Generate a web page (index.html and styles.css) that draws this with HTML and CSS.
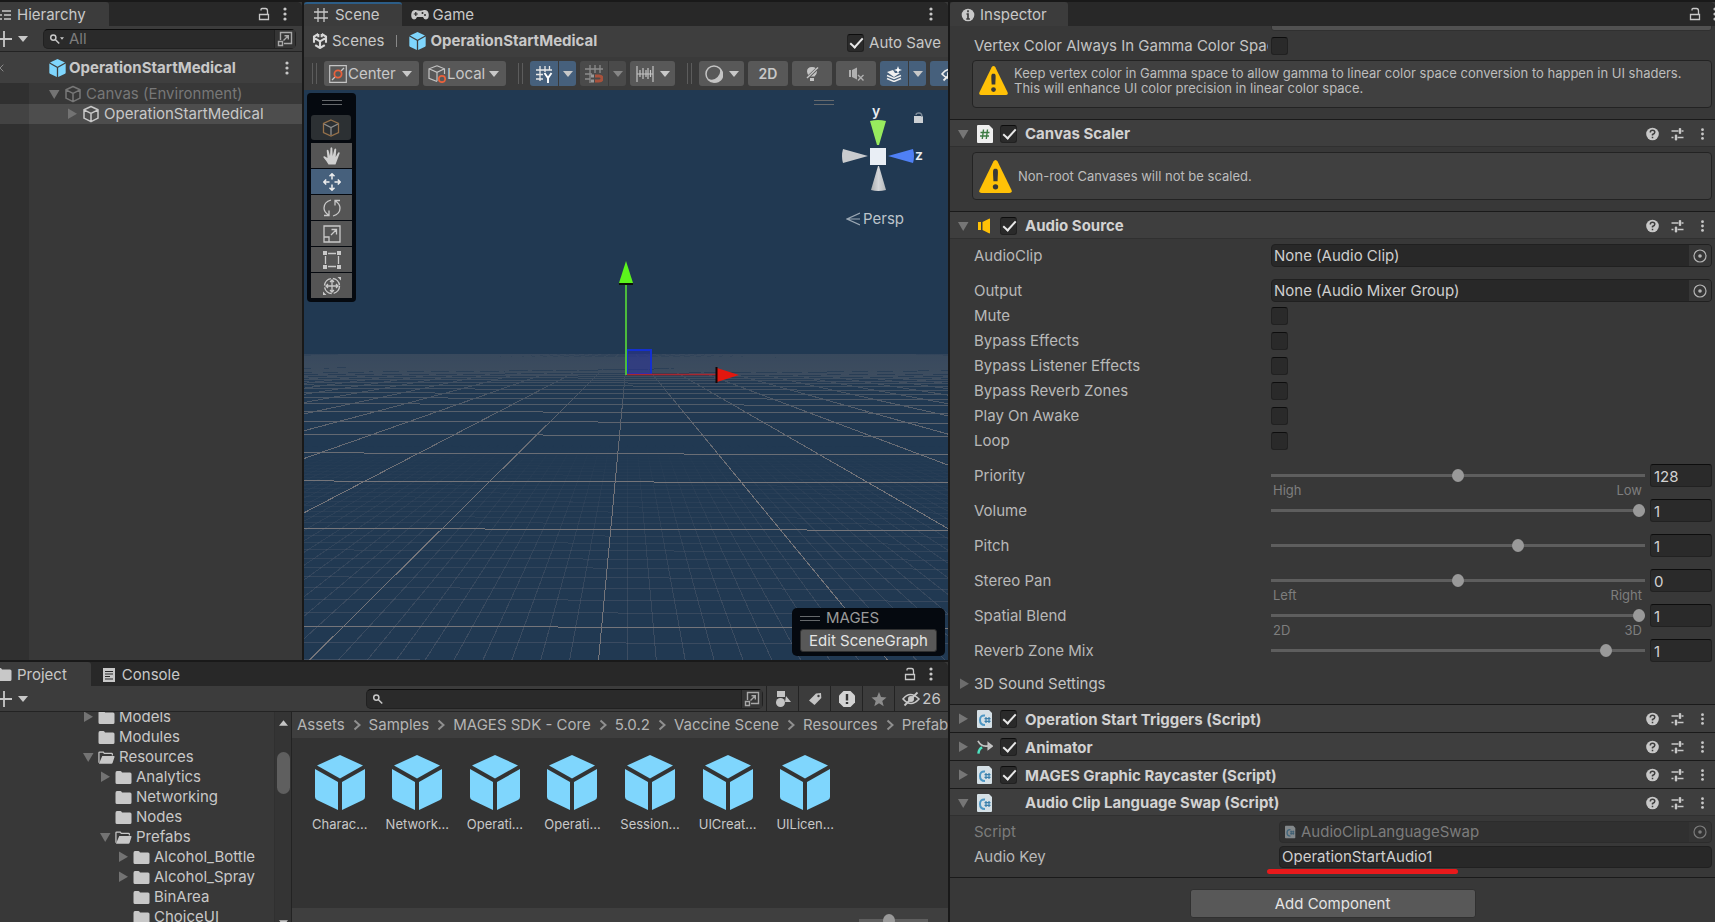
FILE: index.html
```html
<!DOCTYPE html>
<html lang="en">
<head>
    <meta charset="UTF-8">
    <meta name="viewport" content="width=device-width, initial-scale=1.0">
    <title>Scene Editor</title>
    <link rel="stylesheet" href="styles.css">
</head>
<body>

    <!-- icon sprite -->
    <svg class="sprite" aria-hidden="true">
        <symbol id="i-dots" viewBox="0 0 16 16"><g fill="currentColor"><circle cx="8" cy="3" r="1.6"/><circle cx="8" cy="8" r="1.6"/><circle cx="8" cy="13" r="1.6"/></g></symbol>
        <symbol id="i-lock" viewBox="0 0 16 16"><path d="M3.5 8.500h9v5h-9zM5 4.500V3.500Q5 2.500 6 2.500H9.500Q11.500 2.500 11.500 5V8.500" fill="none" stroke="currentColor" stroke-width="1.300"/></symbol>
        <symbol id="i-caret" viewBox="0 0 10 6"><path d="M0 0h10L5 6z" fill="currentColor"/></symbol>
        <symbol id="i-plus" viewBox="0 0 16 16"><path d="M8 0v16M0 8h16" stroke="currentColor" stroke-width="1.800"/></symbol>
        <symbol id="i-down" viewBox="0 0 12 12"><path d="M1 2h10.500L6.200 11z" fill="currentColor"/></symbol>
        <symbol id="i-right" viewBox="0 0 12 12"><path d="M2 .5v10.500L11 5.800z" fill="currentColor"/></symbol>
        <symbol id="i-search" viewBox="0 0 12 12"><g fill="none" stroke="currentColor" stroke-width="1.500"><circle cx="4.300" cy="4.600" r="2.600"/><path d="M6.200 6.500l4 4"/></g></symbol>
        <symbol id="i-popout" viewBox="0 0 16 16"><g fill="none" stroke="currentColor" stroke-width="1.400"><path d="M3.500 9V1.500h11v11H7M1.500 10.500h4v4h-4zM6.500 9.500l4.500-4.500M7.500 4.700h3.800V8.500"/></g></symbol>
        <symbol id="i-list" viewBox="0 0 14 14"><path d="M0 3h2M4 3h9M2 7h2M6 7h7M2 11h2M6 11h7" stroke="currentColor" stroke-width="1.600"/></symbol>
        <symbol id="i-cube" viewBox="0 0 50 55"><g fill="#7fd6fd"><path d="M25 0L48 10.500 25 23.500 2 10.500z"/><path d="M0 14l23 13v28L2 45Q0 44 0 42zM50 14L27 27v28l21-10Q50 44 50 42z"/></g></symbol>
        <symbol id="i-cubeline" viewBox="0 0 18 18"><path d="M9 1.500l7 3.300v8.400l-7 3.500-7-3.500V4.800zM2 4.800l7 3.600 7-3.600M9 8.400v8.300" fill="none" stroke="currentColor" stroke-width="1.500" stroke-linejoin="round"/></symbol>
        <symbol id="i-grid" viewBox="0 0 14 14"><path d="M4 0v14M10 0v14M0 4h14M0 10h14" stroke="currentColor" stroke-width="1.300"/></symbol>
        <symbol id="i-pad" viewBox="0 0 18 12"><path d="M5 1Q9 2.500 13 1 17 .5 17.700 5q.5 5-2.700 5.500Q13 10.500 12 8H6Q5 10.500 3 10.500-.2 10 .3 5 1 .5 5 1z" fill="currentColor"/><path d="M4.800 3v4M2.800 5h4" stroke="#282828" stroke-width="1.200"/><circle cx="11.500" cy="4" r="1" fill="#282828"/><circle cx="14" cy="6" r="1" fill="#282828"/></symbol>
        <symbol id="i-unity" viewBox="0 0 16 16"><path d="M6.300 1L2 3.500v6.300M9.700 1L14 3.500v6.300M3.200 12.200L8 15l4.800-2.800M8 8.300V14M8 8.300L3 5.300M8 8.300l5-3M6.300 1v3.300M9.700 1v3.300" fill="none" stroke="#d8d8d8" stroke-width="2.100"/></symbol>
        <symbol id="i-info" viewBox="0 0 14 14"><circle cx="7" cy="7" r="6.300" fill="currentColor"/><path d="M7 2.300v2M5.500 6H7v5M5.300 11h3.600" stroke="#3c3c3c" stroke-width="1.700" fill="none"/></symbol>
        <symbol id="i-help" viewBox="0 0 14 14"><circle cx="7" cy="7" r="6.300" fill="currentColor"/><path d="M4.800 5.500Q4.800 3.300 7 3.300q2.300 0 2.300 1.900Q9.300 6.500 7 7.500v1M7 9.800v1.500" stroke="#3e3e3e" stroke-width="1.500" fill="none"/></symbol>
        <symbol id="i-preset" viewBox="0 0 14 14"><path d="M1 4h7M11 4h2M9.500 1v6M1 10.500h2M7 10.500h6M5.500 7.500v6" stroke="currentColor" stroke-width="1.500"/><path d="M9.500 1.500v5M5.500 8v5" stroke="currentColor" stroke-width="2.400"/></symbol>
        <symbol id="i-warn" viewBox="0 0 32 32"><path d="M16 0q1.200 0 2 1.500L31.500 29q1 3-2 3h-27q-3 0-2-3L14 1.500Q14.800 0 16 0z" fill="#ffc107"/><path d="M16 8.500c3 0 2.500 1.500 2 12h-4c-.5-10.500-1-12 2-12z" fill="#383838"/><circle cx="16" cy="26" r="2.600" fill="#383838"/></symbol>
        <symbol id="i-hash" viewBox="0 0 16 18"><path d="M0 1q0-1 1-1h11l4 4v13q0 1-1 1H1q-1 0-1-1z" fill="#eee"/><path d="M6.500 4.500L5.300 14M10.500 4.500L9.300 14M3.500 7.500h9M3 11h9" stroke="#3c7b43" stroke-width="1.400"/></symbol>
        <symbol id="i-cs" viewBox="0 0 16 18"><path d="M0 1q0-1 1-1h11l3 3v14q0 1-1 1H1q-1 0-1-1z" fill="#d5e0e6"/><path d="M8 5.500Q3 5 3 10t5 5" fill="none" stroke="#4d97c4" stroke-width="2"/><path d="M9 7v6M12 7v6M7.500 8.700h6M7.500 11.400h6" stroke="#3a7fab" stroke-width="1.200"/></symbol>
        <symbol id="i-speaker" viewBox="0 0 16 16"><path d="M1 4h3v8H1zM5.500 4L12 .7q1-.4 1 .6v13.400q0 1-1 .6L5.500 12z" fill="#ffc107"/></symbol>
        <symbol id="i-animator" viewBox="0 0 17 16"><path d="M1 1.500Q4 7 9 7h6M12 3.800L16 7l-4 3.200z" fill="#c4c4c4" stroke="#c4c4c4" stroke-width="1.800" fill-opacity="0"/><path d="M1.500 15q.5-5 4-6.500" stroke="#4de3c1" stroke-width="2.600" fill="none"/></symbol>
        <symbol id="i-target" viewBox="0 0 14 14"><circle cx="7" cy="7" r="6" fill="none" stroke="currentColor" stroke-width="1.200"/><circle cx="7" cy="7" r="1.800" fill="currentColor"/></symbol>
        <symbol id="i-folder" viewBox="0 0 16 13"><path d="M0 2q0-2 1.500-2H5q1 0 1.500 1.500h8q1.500 0 1.500 1.500v8.500q0 1.500-1.500 1.500h-13Q0 13 0 11.500z" fill="currentColor"/></symbol>
        <symbol id="i-open" viewBox="0 0 18 13"><path d="M1 12V1.500q0-.8.800-.8h3.800l1 1.500h7.800q.8 0 .8.800v1.500" fill="none" stroke="currentColor" stroke-width="1.300"/><path d="M4.500 5h12.300q1 0 .7 1L15.500 12q-.3 1-1.300 1H1z" fill="currentColor"/></symbol>
        <symbol id="i-console" viewBox="0 0 12 14"><path d="M0 0h12v14H0z" fill="currentColor"/><path d="M2 3.500h8M2 6h8M2 8.500h5M2 11h8" stroke="#282828" stroke-width="1.200"/></symbol>
        <symbol id="i-eye" viewBox="0 0 18 14"><path d="M1 7q7-9 16 0-8 9-16 0z" fill="none" stroke="currentColor" stroke-width="1.600"/><circle cx="9" cy="7" r="3" fill="currentColor"/><path d="M2.500 13.500L15.500.5" stroke="currentColor" stroke-width="1.800"/></symbol>
        <symbol id="i-chev" viewBox="0 0 8 12"><path d="M1.500 1.500L6.500 6l-5 4.500" fill="none" stroke="#8f8f8f" stroke-width="2"/></symbol>
    </svg>

    <div class="workspace">
        <div class="top">

            <section class="panel hierarchy">
                <header class="tabs">
                    <button class="tab active"><svg class="ic14"><use href="#i-list"/></svg>Hierarchy</button>
                    <span class="tab-tools">
                        <svg class="ic16"><use href="#i-lock"/></svg>
                        <svg class="ic16"><use href="#i-dots"/></svg>
                    </span>
                </header>
                <div class="bar">
                    <button class="add" aria-label="Create"><svg class="ic16"><use href="#i-plus"/></svg><svg class="caret"><use href="#i-caret"/></svg></button>
                    <label class="search">
                        <svg class="ic12"><use href="#i-search"/></svg><svg class="caret tiny"><use href="#i-caret"/></svg>
                        <input type="text" placeholder="All" aria-label="Search hierarchy">
                        <span class="pop"><svg class="ic16"><use href="#i-popout"/></svg></span>
                    </label>
                </div>
                <div class="stage-head">
                    <svg class="back" viewBox="0 0 6 12"><path d="M0 6L5 1M0 6l5 5" stroke="#8a8a8a" stroke-width="1.500"/></svg>
                    <svg class="cube18"><use href="#i-cube"/></svg>
                    <b>OperationStartMedical</b>
                    <svg class="ic16 end"><use href="#i-dots"/></svg>
                </div>
                <div class="nodes">
                    <div class="node dim"><svg class="ic12"><use href="#i-down"/></svg><svg class="ic18"><use href="#i-cubeline"/></svg>Canvas (Environment)</div>
                    <div class="node picked"><svg class="ic12"><use href="#i-right"/></svg><svg class="ic18"><use href="#i-cubeline"/></svg>OperationStartMedical</div>
                </div>
            </section>

            <section class="panel scene">
                <header class="tabs">
                    <button class="tab active focus"><svg class="ic14"><use href="#i-grid"/></svg>Scene</button>
                    <button class="tab game"><svg class="pad"><use href="#i-pad"/></svg>Game</button>
                    <span class="tab-tools"><svg class="ic16"><use href="#i-dots"/></svg></span>
                </header>
                <div class="crumbs">
                    <svg class="ic16"><use href="#i-unity"/></svg>
                    <a href="#">Scenes</a>
                    <i class="rule"></i>
                    <svg class="cube18"><use href="#i-cube"/></svg>
                    <b>OperationStartMedical</b>
                    <label class="autosave"><input type="checkbox" checked>Auto Save</label>
                </div>
                <div class="toolbar">
                    <i class="grip"></i>
                    <label class="tool drop center">
                        <svg class="ic18" viewBox="0 0 18 18"><path d="M.7.700h16.600v16.600H.7z" fill="none" stroke="#c4c4c4" stroke-width="1.200"/><path d="M3 15l3-3M12 6l3-3" stroke="#c4c4c4" stroke-width="1.300"/><circle cx="9" cy="9" r="3.600" fill="none" stroke="#e8613c" stroke-width="1.800"/></svg>
                        <select aria-label="Pivot mode"><option>Center</option></select>
                        <svg class="caret"><use href="#i-caret"/></svg>
                    </label>
                    <label class="tool drop local">
                        <svg class="ic18" viewBox="0 0 18 18"><path d="M9 .8l7.500 3V9M9 16.500l-8-3.200V3.800l8-3M1 3.800l8 3.500 7.500-3.500M9 7.300v9" fill="none" stroke="#c4c4c4" stroke-width="1.200"/><circle cx="14" cy="14" r="3.200" fill="#585858" stroke="#e8613c" stroke-width="1.700"/></svg>
                        <select aria-label="Pivot rotation"><option>Local</option></select>
                        <svg class="caret"><use href="#i-caret"/></svg>
                    </label>
                    <i class="grip far"></i>
                    <span class="pair on">
                        <button class="tool" aria-label="Grid"><svg class="ic18" viewBox="0 0 18 18"><path d="M5 1v15M10 1v6M14.500 1v4M1 5h16M1 9.500h7M1 14h7" stroke="#e8e8e8" stroke-width="1.300"/><path d="M9.500 8l3.500 5 3.500-5M13 12.500V18" fill="none" stroke="#fff" stroke-width="1.900"/></svg></button>
                        <button class="tool arrow" aria-label="Grid options"><svg class="caret"><use href="#i-caret"/></svg></button>
                    </span>
                    <span class="pair off">
                        <button class="tool" aria-label="Snap"><svg class="ic18" viewBox="0 0 18 18"><path d="M5 0v18M10 0v8M15 0v8M0 4h18M0 9h7M0 14h5" stroke="#8c8c8c" stroke-width="1.300"/><path d="M10 11h4q3 0 3 2.500T14 16h-4" stroke="#a9523c" stroke-width="3" fill="none"/><path d="M6 9.500h3v3H6zM6 14.500h3v3H6z" fill="#9a9a9a"/></svg></button>
                        <button class="tool arrow" aria-label="Snap options"><svg class="caret"><use href="#i-caret"/></svg></button>
                    </span>
                    <button class="tool wide" aria-label="Snap increment"><svg class="ic18" viewBox="0 0 18 18"><path d="M1 1v16M17 1v16M4 5v7M7 3v11M10 5v7M12 3v11M14.500 5v7M1 9h16" stroke="#c4c4c4" stroke-width="1.200"/></svg><svg class="caret"><use href="#i-caret"/></svg></button>
                    <i class="grip far"></i>
                    <button class="tool wide" aria-label="Draw mode"><svg class="ic18" viewBox="0 0 18 18"><circle cx="9" cy="9" r="8" fill="none" stroke="#c4c4c4" stroke-width="1.500"/><path d="M14.500 3a8 8 0 1 1-11 11 8.500 8.500 0 0 0 11-11z" fill="#c4c4c4"/></svg><svg class="caret"><use href="#i-caret"/></svg></button>
                    <button class="tool two-d">2D</button>
                    <button class="tool single" aria-label="Lighting"><svg class="ic16" viewBox="0 0 16 16"><path d="M8 1Q13 1 13 5.500 13 8 10.500 10.500h-5Q3 8 3 5.500 3 1 8 1zM6 12h4v3H6z" fill="#c4c4c4"/><path d="M2 13L15 1" stroke="#585858" stroke-width="3"/><path d="M3 12L14 1.500" stroke="#c4c4c4" stroke-width="1.400"/></svg></button>
                    <button class="tool single" aria-label="Audio"><svg class="ic16" viewBox="0 0 16 16"><path d="M1 4h2v7H1zM4 4l5-2.500v12L4 11z" fill="#b0b0b0"/><path d="M10 9l5.500 5.500M15.500 9L10 14.500" stroke="#b0b0b0" stroke-width="1.400"/></svg></button>
                    <span class="pair on">
                        <button class="tool" aria-label="Effects"><svg class="ic16" viewBox="0 0 16 16"><path d="M1 6l6-2 2 3 5 0-6 4z" fill="#eee"/><path d="M1 9.500l7 3 7-3M1 12.500l7 3 7-3" fill="none" stroke="#eee" stroke-width="1.500"/><path d="M12 0l1 3 3 1-3 1-1 3-1-3-3-1 3-1z" fill="#fff"/></svg></button>
                        <button class="tool arrow" aria-label="Effect options"><svg class="caret"><use href="#i-caret"/></svg></button>
                    </span>
                    <button class="tool eye" aria-label="Visibility"><svg class="ic18"><use href="#i-eye"/></svg></button>
                </div>

                <div class="view">
                    <svg class="world" viewBox="304 90 644 570" preserveAspectRatio="xMidYMid slice">
                        <defs>
                            <linearGradient id="fadeMajor" gradientUnits="userSpaceOnUse" x1="0" y1="352" x2="0" y2="480">
                                <stop offset="0" stop-color="#fff" stop-opacity=".08"/>
                                <stop offset=".2" stop-color="#fff" stop-opacity=".3"/>
                                <stop offset=".5" stop-color="#fff" stop-opacity=".7"/>
                                <stop offset="1" stop-color="#fff"/>
                            </linearGradient>
                            <linearGradient id="fadeMinor" gradientUnits="userSpaceOnUse" x1="0" y1="445" x2="0" y2="660">
                                <stop offset="0" stop-color="#fff" stop-opacity="0"/>
                                <stop offset=".5" stop-color="#fff" stop-opacity=".6"/>
                                <stop offset="1" stop-color="#fff"/>
                            </linearGradient>
                            <linearGradient id="haze" x1="0" y1="0" x2="0" y2="1">
                                <stop offset="0" stop-color="#6b6b76" stop-opacity=".24"/>
                                <stop offset="1" stop-color="#6b6b76" stop-opacity="0"/>
                            </linearGradient>
                            <mask id="mMajor" maskUnits="userSpaceOnUse" x="304" y="354" width="644" height="306"><path d="M304 354h644v306H304z" fill="url(#fadeMajor)"/></mask>
                            <mask id="mMinor" maskUnits="userSpaceOnUse" x="304" y="354" width="644" height="306"><path d="M304 354h644v306H304z" fill="url(#fadeMinor)"/></mask>
                        </defs>
                        <path d="M304 354h644v34H304z" fill="url(#haze)"/>
                        <g mask="url(#mMinor)"><g id="minor" stroke="#747481" stroke-opacity=".34"></g></g>
                        <g mask="url(#mMajor)"><g id="major" stroke="#75757a"></g></g>
                        <!-- move handle -->
                        <path d="M627 350h24v24h-24z" fill="#2a31a0" fill-opacity=".5" stroke="#1430cf" stroke-width="2"/>
                        <path d="M627 374.500h90" stroke="#a8272f" stroke-width="1.600"/>
                        <path d="M717 368l22 7-22 7z" fill="#e3170f"/><path d="M716.500 367v16" stroke="#140505" stroke-width="2"/>
                        <path d="M626 284v91" stroke="#4cbb3c" stroke-width="2"/>
                        <path d="M626 261l7 22h-14z" fill="#5cf41c"/><path d="M619 284h14" stroke="#0c1406" stroke-width="2"/>
                    </svg>

                    <div class="palette">
                        <i class="handle"></i>
                        <button class="first" aria-label="Tool context"><svg viewBox="0 0 18 18"><path d="M9 1l7.500 3.500v9L9 17l-7.500-3.500v-9z" fill="none" stroke="#96714a" stroke-width="1.300"/><path d="M2 5l7 3.500L16 5M9 8.500V16" fill="none" stroke="#8f8f8f" stroke-width="1.300"/></svg></button>
                        <button aria-label="View"><svg viewBox="0 0 18 18"><path d="M5.500 17.500Q4 14.500.5 10.500q-.5-1.500 1-1.300L4.500 11 3.700 3.500q1-1.500 1.800 0L7 9 7.500 1q1-1.500 1.800 0L9.700 9 11.500 2q1.200-1.300 1.700.3L12.700 10l2.500-4.500q1.500-.8 1.500.8L14 13.500l-1.500 4z" fill="#d0d0d0"/></svg></button>
                        <button class="on" aria-label="Move"><svg viewBox="0 0 18 18"><path d="M9 6.500V1M9 11.500V17M6.500 9H1M11.500 9H17M6.500 3.200L9 .8l2.500 2.400M6.500 14.800L9 17.200l2.500-2.400M3.200 6.500L.8 9l2.400 2.500M14.800 6.500L17.200 9l-2.400 2.500" fill="none" stroke="#eee" stroke-width="1.500"/></svg></button>
                        <button aria-label="Rotate"><svg viewBox="0 0 18 18"><path d="M5.500 16Q1 13 1 9q0-6 7-8M12.500 2Q17 5 17 9q0 6-7 8M1 16.500h5V11.500M17 1.500h-5V6.500" fill="none" stroke="#c9c9c9" stroke-width="1.300"/></svg></button>
                        <button aria-label="Scale"><svg viewBox="0 0 18 18"><path d="M1 1h16v16H1zM1 12h5v5M8 10l5.500-5.500M8.500 4.500h5V9.500" fill="none" stroke="#c9c9c9" stroke-width="1.300"/></svg></button>
                        <button aria-label="Rect"><svg viewBox="0 0 18 18"><path d="M2.500 5v8M15.500 5v8M5 2.500h8M5 15.500h8" stroke="#c9c9c9" stroke-width="1.300"/><path d="M0 0h4v4H0zM14 0h4v4h-4zM0 14h4v4H0zM14 14h4v4h-4z" fill="#c9c9c9"/></svg></button>
                        <button aria-label="Transform"><svg viewBox="0 0 18 18"><circle cx="9" cy="9" r="7.500" fill="none" stroke="#c9c9c9" stroke-width="1.400" stroke-dasharray="10 2"/><path d="M9 3v12M3 9h12M7 5l2-2 2 2M7 13l2 2 2-2M5 7L3 9l2 2M13 7l2 2-2 2" fill="none" stroke="#c9c9c9" stroke-width="1.300"/><path d="M14.500 0H18v3.500zM0 14.500V18h3.500z" fill="#c9c9c9"/></svg></button>
                    </div>

                    <div class="orient">
                        <i class="handle"></i>
                        <svg class="gizmo" viewBox="836 104 92 90">
                            <defs>
                                <linearGradient id="cone"><stop offset="0" stop-color="#aaadb0"/><stop offset=".5" stop-color="#d4d6d9"/><stop offset="1" stop-color="#b4b7ba"/></linearGradient>
                            </defs>
                            <path d="M870 121q8-2 16 0l-7 24h-2z" fill="#97ea5e"/>
                            <path d="M871 190q7 2 15 0l-7-24h-1z" fill="url(#cone)"/>
                            <path d="M843 149q-2 7 0 14l25-7z" fill="#c9cbce"/>
                            <path d="M913 149q2 7 0 14l-25-7z" fill="#4f80f5"/>
                            <path d="M870 148h16v17h-16z" fill="#e9eef5"/>
                            <path d="M914 116h9v7h-9z" fill="#ccd0d4"/><path d="M916 115q0-2 3-2t3 4" fill="none" stroke="#7d8b99" stroke-width="1.300"/>
                            <text x="876" y="116" class="axis" text-anchor="middle">y</text>
                            <text x="919" y="160" class="axis" text-anchor="middle">z</text>
                        </svg>
                        <button class="persp"><svg viewBox="0 0 14 14"><path d="M14 1L1 7l13 6M1 7h13" fill="none" stroke="#9aa7b3" stroke-width="1.200"/></svg>Persp</button>
                    </div>

                    <div class="mages">
                        <div class="mages-head"><i class="handle"></i>MAGES</div>
                        <button>Edit SceneGraph</button>
                    </div>
                </div>
            </section>
        </div>

        <section class="panel project">
            <header class="tabs">
                <button class="tab active folder-tab"><svg class="fold"><use href="#i-folder"/></svg>Project</button>
                <button class="tab console"><svg class="cons"><use href="#i-console"/></svg>Console</button>
                <span class="tab-tools">
                    <svg class="ic16"><use href="#i-lock"/></svg>
                    <svg class="ic16"><use href="#i-dots"/></svg>
                </span>
            </header>
            <div class="bar">
                <button class="add" aria-label="Create asset"><svg class="ic16"><use href="#i-plus"/></svg><svg class="caret"><use href="#i-caret"/></svg></button>
                <label class="search asset-search">
                    <svg class="ic12"><use href="#i-search"/></svg>
                    <input type="text" aria-label="Search assets">
                    <span class="pop"><svg class="ic16"><use href="#i-popout"/></svg></span>
                </label>
                <div class="filters">
                    <button aria-label="Search by type"><svg class="ic16" viewBox="0 0 16 16"><path d="M2 0h8v6H2zM11 5l5 6h-6z" fill="#c4c4c4"/><circle cx="5.500" cy="11.500" r="4.500" fill="#c4c4c4"/></svg></button>
                    <button aria-label="Search by label"><svg class="ic14" viewBox="0 0 14 14"><path d="M1 8.500L8 1.500l5-.5.3 5L6.500 13z" fill="#c4c4c4"/><circle cx="10.500" cy="4" r="1.200" fill="#3c3c3c"/></svg></button>
                    <button aria-label="Search by import log"><svg class="ic18" viewBox="0 0 18 18"><path d="M5.500 1h7L17 5.500v7L12.500 17h-7L1 12.500v-7z" fill="#d2d2d2"/><path d="M9 4v6.500M9 12v2" stroke="#333" stroke-width="2.400"/></svg></button>
                    <button aria-label="Favorites"><svg class="ic16" viewBox="0 0 16 16"><path d="M8 1l2 5 5.500.4-4.200 3.500 1.400 5.300L8 12.300l-4.700 2.900 1.400-5.300L.5 6.400 6 6z" fill="#8c8c8c"/></svg></button>
                    <button class="hidden-count"><svg class="ic18"><use href="#i-eye"/></svg>26</button>
                </div>
            </div>
            <div class="browser">
                <div class="tree">
                    <ul>
                        <li class="l1"><svg class="ic12"><use href="#i-right"/></svg><svg class="fold"><use href="#i-folder"/></svg>Models</li>
                        <li class="l1"><svg class="ic12"></svg><svg class="fold"><use href="#i-folder"/></svg>Modules</li>
                        <li class="l1"><svg class="ic12"><use href="#i-down"/></svg><svg class="fold"><use href="#i-open"/></svg>Resources</li>
                        <li class="l2"><svg class="ic12"><use href="#i-right"/></svg><svg class="fold"><use href="#i-folder"/></svg>Analytics</li>
                        <li class="l2"><svg class="ic12"></svg><svg class="fold"><use href="#i-folder"/></svg>Networking</li>
                        <li class="l2"><svg class="ic12"></svg><svg class="fold"><use href="#i-folder"/></svg>Nodes</li>
                        <li class="l2"><svg class="ic12"><use href="#i-down"/></svg><svg class="fold"><use href="#i-open"/></svg>Prefabs</li>
                        <li class="l3"><svg class="ic12"><use href="#i-right"/></svg><svg class="fold"><use href="#i-folder"/></svg>Alcohol_Bottle</li>
                        <li class="l3"><svg class="ic12"><use href="#i-right"/></svg><svg class="fold"><use href="#i-folder"/></svg>Alcohol_Spray</li>
                        <li class="l3"><svg class="ic12"></svg><svg class="fold"><use href="#i-folder"/></svg>BinArea</li>
                        <li class="l3"><svg class="ic12"></svg><svg class="fold"><use href="#i-folder"/></svg>ChoiceUI</li>
                    </ul>
                    <div class="scroll"><svg class="up" viewBox="0 0 10 6"><path d="M0 6h10L5 0z" fill="#c4c4c4"/></svg><i class="bar-thumb"></i><svg class="down"><use href="#i-caret"/></svg></div>
                </div>
                <div class="files">
                    <nav class="path">
                        <a href="#">Assets</a><svg><use href="#i-chev"/></svg>
                        <a href="#">Samples</a><svg><use href="#i-chev"/></svg>
                        <a href="#">MAGES SDK - Core</a><svg><use href="#i-chev"/></svg>
                        <a href="#">5.0.2</a><svg><use href="#i-chev"/></svg>
                        <a href="#">Vaccine Scene</a><svg><use href="#i-chev"/></svg>
                        <a href="#">Resources</a><svg><use href="#i-chev"/></svg>
                        <a href="#">Prefabs</a>
                    </nav>
                    <div class="assets">
                        <figure><svg><use href="#i-cube"/></svg><figcaption>Charac...</figcaption></figure>
                        <figure><svg><use href="#i-cube"/></svg><figcaption>Network...</figcaption></figure>
                        <figure><svg><use href="#i-cube"/></svg><figcaption>Operati...</figcaption></figure>
                        <figure><svg><use href="#i-cube"/></svg><figcaption>Operati...</figcaption></figure>
                        <figure><svg><use href="#i-cube"/></svg><figcaption>Session...</figcaption></figure>
                        <figure><svg><use href="#i-cube"/></svg><figcaption>UICreat...</figcaption></figure>
                        <figure><svg><use href="#i-cube"/></svg><figcaption>UILicen...</figcaption></figure>
                    </div>
                    <div class="status"><input type="range" min="0" max="100" value="42" aria-label="Icon size"></div>
                </div>
            </div>
        </section>
    </div>

    <section class="panel inspector">
        <header class="tabs">
            <button class="tab active"><svg class="ic14"><use href="#i-info"/></svg>Inspector</button>
            <span class="tab-tools">
                <svg class="ic16"><use href="#i-lock"/></svg>
                <svg class="ic16"><use href="#i-dots"/></svg>
            </span>
        </header>
        <div class="props">
            <div class="canvas-part">
                <select class="channels" aria-label="Additional Shader Channels"><option></option></select>
                <div class="row check"><label for="vcol">Vertex Color Always In Gamma Color Space</label><input type="checkbox" id="vcol"></div>
                <div class="helpbox small"><svg><use href="#i-warn"/></svg><p>Keep vertex color in Gamma space to allow gamma to linear color space conversion to happen in UI shaders.<br>This will enhance UI color precision in linear color space.</p></div>
            </div>

            <div class="component open">
                <svg class="ic12 fold-arrow"><use href="#i-down"/></svg><svg class="type"><use href="#i-hash"/></svg>
                <input type="checkbox" id="c1" checked><label for="c1">Canvas Scaler</label>
                <span class="acts"><svg><use href="#i-help"/></svg><svg><use href="#i-preset"/></svg><svg><use href="#i-dots"/></svg></span>
            </div>
            <div class="helpbox"><svg><use href="#i-warn"/></svg><p>Non-root Canvases will not be scaled.</p></div>

            <div class="component open">
                <svg class="ic12 fold-arrow"><use href="#i-down"/></svg><svg class="type"><use href="#i-speaker"/></svg>
                <input type="checkbox" id="c2" checked><label for="c2">Audio Source</label>
                <span class="acts"><svg><use href="#i-help"/></svg><svg><use href="#i-preset"/></svg><svg><use href="#i-dots"/></svg></span>
            </div>
            <div class="body">
                <div class="row object"><label for="clip">AudioClip</label><span class="field"><input type="text" id="clip" value="None (Audio Clip)"><span class="pick"><svg><use href="#i-target"/></svg></span></span></div>
                <div class="row object"><label for="out">Output</label><span class="field"><input type="text" id="out" value="None (Audio Mixer Group)"><span class="pick"><svg><use href="#i-target"/></svg></span></span></div>
                <div class="toggles">
                    <div class="row check"><label for="t1">Mute</label><input type="checkbox" id="t1"></div>
                    <div class="row check"><label for="t2">Bypass Effects</label><input type="checkbox" id="t2"></div>
                    <div class="row check"><label for="t3">Bypass Listener Effects</label><input type="checkbox" id="t3"></div>
                    <div class="row check"><label for="t4">Bypass Reverb Zones</label><input type="checkbox" id="t4"></div>
                    <div class="row check"><label for="t5">Play On Awake</label><input type="checkbox" id="t5"></div>
                    <div class="row check"><label for="t6">Loop</label><input type="checkbox" id="t6"></div>
                </div>
                <div class="row slide"><label for="s1">Priority</label><div class="track"><input type="range" id="s1" min="0" max="256" value="128"><div class="ends"><span>High</span><span>Low</span></div></div><input type="text" class="num" value="128" aria-label="Priority value"></div>
                <div class="row slide"><label for="s2">Volume</label><div class="track"><input type="range" id="s2" min="0" max="1" step="0.01" value="1"></div><input type="text" class="num" value="1" aria-label="Volume value"></div>
                <div class="row slide"><label for="s3">Pitch</label><div class="track"><input type="range" id="s3" min="-3" max="3" step="0.01" value="1"></div><input type="text" class="num" value="1" aria-label="Pitch value"></div>
                <div class="row slide"><label for="s4">Stereo Pan</label><div class="track"><input type="range" id="s4" min="-1" max="1" step="0.01" value="0"><div class="ends"><span>Left</span><span>Right</span></div></div><input type="text" class="num" value="0" aria-label="Stereo pan value"></div>
                <div class="row slide"><label for="s5">Spatial Blend</label><div class="track"><input type="range" id="s5" min="0" max="1" step="0.01" value="1"><div class="ends"><span>2D</span><span>3D</span></div></div><input type="text" class="num" value="1" aria-label="Spatial blend value"></div>
                <div class="row slide"><label for="s6">Reverb Zone Mix</label><div class="track"><input type="range" id="s6" min="0" max="1.1" step="0.01" value="1"></div><input type="text" class="num" value="1" aria-label="Reverb zone mix value"></div>
                <div class="foldout"><svg class="ic12"><use href="#i-right"/></svg>3D Sound Settings</div>
            </div>

            <div class="component">
                <svg class="ic12 fold-arrow"><use href="#i-right"/></svg><svg class="type"><use href="#i-cs"/></svg>
                <input type="checkbox" id="c3" checked><label for="c3">Operation Start Triggers (Script)</label>
                <span class="acts"><svg><use href="#i-help"/></svg><svg><use href="#i-preset"/></svg><svg><use href="#i-dots"/></svg></span>
            </div>
            <div class="component">
                <svg class="ic12 fold-arrow"><use href="#i-right"/></svg><svg class="type"><use href="#i-animator"/></svg>
                <input type="checkbox" id="c4" checked><label for="c4">Animator</label>
                <span class="acts"><svg><use href="#i-help"/></svg><svg><use href="#i-preset"/></svg><svg><use href="#i-dots"/></svg></span>
            </div>
            <div class="component">
                <svg class="ic12 fold-arrow"><use href="#i-right"/></svg><svg class="type"><use href="#i-cs"/></svg>
                <input type="checkbox" id="c5" checked><label for="c5">MAGES Graphic Raycaster (Script)</label>
                <span class="acts"><svg><use href="#i-help"/></svg><svg><use href="#i-preset"/></svg><svg><use href="#i-dots"/></svg></span>
            </div>
            <div class="component open">
                <svg class="ic12 fold-arrow"><use href="#i-down"/></svg><svg class="type"><use href="#i-cs"/></svg>
                <span class="no-check"></span><b>Audio Clip Language Swap (Script)</b>
                <span class="acts"><svg><use href="#i-help"/></svg><svg><use href="#i-preset"/></svg><svg><use href="#i-dots"/></svg></span>
            </div>
            <div class="body script-body">
                <div class="row disabled"><label for="scr">Script</label><span class="field"><svg class="mini"><use href="#i-cs"/></svg><input type="text" id="scr" value="AudioClipLanguageSwap" disabled><span class="pick"><svg><use href="#i-target"/></svg></span></span></div>
                <div class="row key"><label for="key">Audio Key</label><span class="field"><input type="text" id="key" value="OperationStartAudio1"></span></div>
            </div>
            <div class="footer"><button class="add-component">Add Component</button></div>
        </div>
    </section>

    <script src="script.js"></script>
</body>
</html>
```

FILE: styles.css
```css
* {
    box-sizing: border-box;
}
body {
    margin: 0;
    height: 100vh;
    padding-top: 2px;
    display: flex;
    gap: 2px;
    overflow: hidden;
    background-color: #191919;
    color: #c8c8c8;
    font-family: Inter, "Liberation Sans", sans-serif;
    font-size: 15px;
    line-height: 20px;
}
button, input, select {
    font: inherit;
    color: inherit;
    margin: 0;
    padding: 0;
    border: none;
    background: none;
}
a {
    color: inherit;
    text-decoration: none;
}
b {
    font-weight: 700;
}
svg {
    display: block;
    flex: none;
}
.sprite {
    position: absolute;
    width: 0;
    height: 0;
}
.ic12 { width: 12px; height: 12px; }
.ic14 { width: 14px; height: 14px; }
.ic16 { width: 16px; height: 16px; }
.ic18 { width: 18px; height: 18px; }
.cube18 { width: 17px; height: 18px; }
.caret { width: 10px; height: 6px; }
.fold { width: 17px; height: 13px; }
.pad { width: 18px; height: 12px; }
.cons { width: 12px; height: 14px; }

/* layout */
.workspace {
    flex: 1;
    min-width: 0;
    display: flex;
    flex-direction: column;
    gap: 2px;
}
.top {
    flex: 1;
    min-height: 0;
    display: flex;
    gap: 2px;
}
.panel {
    display: flex;
    flex-direction: column;
    overflow: hidden;
    background-color: #383838;
}
.hierarchy { width: 302px; }
.scene { flex: 1; min-width: 0; }
.project { height: 260px; }
.inspector { width: 765px; }

/* tabs */
.tabs {
    flex: none;
    height: 24px;
    display: flex;
    background-color: #282828;
    border-radius: 0 5px 0 0;
}
.tab {
    display: flex;
    align-items: center;
    gap: 5px;
    padding: 1px 18px 0 12px;
    border-radius: 3px 3px 0 0;
}
.tab.active {
    background-color: #3c3c3c;
}
.tab.focus {
    border-top: 2px solid #2c5d87;
    padding: 0 22px 0 10px;
    gap: 7px;
}
.tab.game {
    padding-left: 9px;
    gap: 4px;
}
.tab.folder-tab {
    padding-left: 0;
    padding-right: 24px;
    margin-left: -5px;
}
.tab.console {
    gap: 7px;
}
.hierarchy .tab {
    padding-left: 0;
    padding-right: 23px;
    margin-left: -2px;
}
.inspector .tab {
    padding-left: 11px;
    padding-right: 21px;
}
.tab-tools {
    margin-left: auto;
    display: flex;
    align-items: center;
    gap: 5px;
    padding-right: 9px;
}
.inspector .tab-tools {
    padding-right: 0;
    gap: 4px;
    margin-right: -8px;
}

/* bars with search */
.bar {
    flex: none;
    height: 26px;
    display: flex;
    align-items: center;
    padding-right: 6px;
    background-color: #3c3c3c;
    border-bottom: 1px solid #232323;
}
.add {
    display: flex;
    align-items: center;
    gap: 6px;
    margin-left: -4px;
}
.search {
    margin-left: 15px;
    flex: 1;
    min-width: 0;
    height: 20px;
    display: flex;
    align-items: center;
    padding-left: 5px;
    background-color: #2a2a2a;
    border: 1px solid #212121;
    border-top-color: #0d0d0d;
    border-radius: 5px;
}
.search input {
    flex: 1;
    min-width: 0;
    outline: none;
    padding-left: 5px;
    line-height: 18px;
}
.search input::placeholder {
    color: #7d7d7d;
}
.caret.tiny {
    width: 4px;
    height: 3px;
    margin-left: -1px;
}
.pop {
    height: 18px;
    display: flex;
    align-items: center;
    padding: 0 2px;
    color: #a8a8a8;
    background-color: #353535;
    border-left: 1px solid #212121;
}
.project .bar {
    padding-right: 0;
}
.asset-search {
    margin-left: auto;
    flex: 0 0 397px;
}
.filters {
    height: 25px;
    margin-left: 3px;
    display: flex;
}
.filters button {
    display: flex;
    align-items: center;
    justify-content: center;
    width: 32px;
    border-left: 1px solid #232323;
}
.filters .hidden-count {
    width: 54px;
    gap: 2px;
}

/* hierarchy */
.stage-head {
    height: 31px;
    display: flex;
    align-items: center;
    gap: 3px;
    padding-right: 7px;
    background-color: #3f3f3f;
}
.back {
    width: 4px;
    height: 12px;
    margin-right: 42px;
}
.end {
    margin-left: auto;
}
.nodes {
    flex: 1;
    background: linear-gradient(to right, #303030 29px, #383838 29px);
}
.node {
    height: 20px;
    display: flex;
    align-items: center;
    gap: 4px;
    padding-left: 48px;
}
.node .ic12 {
    color: #737373;
}
.node.dim {
    height: 21px;
    color: #777;
}
.node.picked {
    padding-left: 66px;
    background: linear-gradient(to right, #434343 29px, #4d4d4d 29px);
}

/* scene */
.crumbs {
    flex: none;
    height: 31px;
    display: flex;
    align-items: center;
    gap: 4px;
    padding: 0 7px 2px 8px;
    background-color: #3e3e3e;
}
.crumbs .rule {
    width: 1px;
    height: 12px;
    margin: 0 8px;
    background-color: #888;
}
.autosave {
    margin-left: auto;
    padding-top: 5px;
    display: flex;
    align-items: center;
    gap: 5px;
}
.toolbar {
    flex: none;
    height: 33px;
    display: flex;
    align-items: center;
    gap: 4px;
    padding-left: 8px;
    background-color: #3a3a3a;
    overflow: hidden;
}
.grip {
    flex: none;
    width: 5px;
    height: 21px;
    margin-right: 3px;
    border: solid #5c5c5c;
    border-width: 0 1px;
}
.grip.far {
    margin-left: 8px;
}
.tool {
    flex: none;
    height: 25px;
    display: flex;
    align-items: center;
    justify-content: center;
    background-color: #585858;
    border-radius: 3px;
}
.drop select {
    appearance: none;
    flex: 1;
    min-width: 0;
    outline: none;
}
.drop {
    padding: 0 7px 0 5px;
    gap: 1px;
}
.center { width: 95px; }
.local { width: 83px; }
.pair {
    flex: none;
    display: flex;
    gap: 1px;
}
.pair .tool {
    width: 28px;
    border-radius: 3px 0 0 3px;
}
.pair .arrow {
    width: 17px;
    border-radius: 0 3px 3px 0;
}
.pair.on .tool, .tool.eye {
    background-color: #46607c;
}
.pair.off .tool {
    background-color: #4a4a4a;
    color: #858585;
}
.wide {
    width: 45px;
    gap: 6px;
}
.single, .two-d {
    width: 40px;
}
.two-d {
    font-size: 14px;
    font-weight: 600;
}
.tool.eye {
    width: 40px;
    color: #eee;
}
.view {
    flex: 1;
    min-height: 0;
    position: relative;
    background-color: #213952;
}
.world {
    position: absolute;
    width: 100%;
    height: 100%;
}
#major, #minor {
    shape-rendering: crispEdges;
}
.handle {
    display: block;
    width: 20px;
    height: 5px;
    border: solid #66696c;
    border-width: 1px 0;
}
.palette {
    position: absolute;
    left: 3px;
    top: 3px;
    width: 49px;
    padding: 7px 4px 4px;
    display: flex;
    flex-direction: column;
    gap: 1px;
    background-color: #05090f;
    border-radius: 4px;
}
.palette .handle {
    align-self: center;
}
.palette button {
    height: 25px;
    display: flex;
    align-items: center;
    justify-content: center;
    background-color: #555;
}
.palette button svg {
    width: 18px;
    height: 18px;
}
.palette .first {
    margin: 9px 1px 2px 0;
    background-color: #2c3033;
    border-radius: 3px;
}
.palette .on {
    background-color: #46607c;
}
.orient {
    position: absolute;
    right: 20px;
    top: 10px;
    width: 114px;
    display: flex;
    flex-direction: column;
}
.gizmo {
    width: 92px;
    height: 90px;
    margin: -1px 0 0 22px;
    overflow: visible;
}
.axis {
    font-size: 14px;
    font-weight: 600;
    fill: #e8edf2;
}
.persp {
    display: flex;
    align-items: center;
    gap: 3px;
    margin: 15px 0 0 32px;
    color: #bcc4cb;
}
.persp svg {
    width: 14px;
    height: 14px;
}
.mages {
    position: absolute;
    right: 3px;
    bottom: 4px;
    width: 153px;
    padding: 0 8px 4px;
    background-color: #05090f;
    border-radius: 5px;
}
.mages-head {
    display: flex;
    align-items: center;
    gap: 6px;
    height: 20px;
    margin-bottom: 1px;
    color: #9a9a9a;
}
.mages button {
    display: block;
    width: 100%;
    height: 23px;
    background-color: #585858;
    color: #e4e4e4;
    border-radius: 3px;
    border: 1px solid #303030;
}

/* project */
.browser {
    flex: 1;
    min-height: 0;
    display: flex;
}
.tree {
    width: 292px;
    display: flex;
    overflow: hidden;
    border-right: 1px solid #232323;
}
.tree ul {
    list-style: none;
    flex: 1;
    margin: -5px 0 0;
    padding: 0;
}
.tree li {
    height: 20px;
    display: flex;
    align-items: center;
    gap: 4px;
    color: #c8c8c8;
}
.tree li .ic12 {
    color: #737373;
}
.l1 { padding-left: 82px; }
.l2 { padding-left: 99px; }
.l3 { padding-left: 117px; }
.scroll {
    width: 17px;
    display: flex;
    flex-direction: column;
    align-items: center;
    padding-top: 8px;
    background-color: #343434;
    border-left: 1px solid #303030;
}
.scroll .up, .scroll .down {
    width: 9px;
    height: 6px;
    color: #c4c4c4;
}
.scroll .down {
    margin-top: auto;
    margin-bottom: -4px;
}
.bar-thumb {
    width: 13px;
    height: 42px;
    margin-top: 26px;
    background-color: #5f5f5f;
    border-radius: 7px;
}
.files {
    flex: 1;
    min-width: 0;
    display: flex;
    flex-direction: column;
    background-color: #333;
}
.path {
    flex: none;
    height: 26px;
    display: flex;
    align-items: center;
    gap: 8px;
    padding-left: 5px;
    white-space: nowrap;
    overflow: hidden;
    background-color: #3e3e3e;
    color: #b4b4b4;
}
.path svg {
    width: 8px;
    height: 12px;
}
.assets {
    flex: 1;
    width: 543px;
    margin-left: 9px;
    padding-top: 17px;
    display: grid;
    grid-template-columns: repeat(7, 1fr);
}
.assets figure {
    margin: 0;
    display: flex;
    flex-direction: column;
    align-items: center;
    gap: 4px;
}
.assets svg {
    width: 50px;
    height: 55px;
}
.assets figcaption {
    font-size: 13px;
    line-height: 20px;
}
.status {
    flex: none;
    height: 14px;
    background-color: #3f3f3f;
    padding: 3px 20px 0 0;
    overflow: hidden;
}
.status input {
    display: block;
    width: 69px;
    margin-left: auto;
}

/* form controls */
input[type="checkbox"] {
    appearance: none;
    flex: none;
    width: 17px;
    height: 18px;
    background-color: #2a2a2a;
    border: 1px solid #212121;
    border-top-color: #0d0d0d;
    border-radius: 3px;
}
input[type="checkbox"]:checked::after {
    content: "";
    display: block;
    width: 11px;
    height: 5px;
    margin: 3px 0 0 2px;
    border: solid #e8e8e8;
    border-width: 0 0 2px 2px;
    transform: rotate(-48deg);
}
input[type="range"] {
    appearance: none;
    height: 19px;
    background: linear-gradient(#5e5e5e, #5e5e5e) center / 100% 3px no-repeat;
}
input[type="range"]::-webkit-slider-thumb {
    appearance: none;
    width: 12px;
    height: 13px;
    background-color: #999;
    border-radius: 50%;
}

/* inspector */
.props {
    flex: 1;
    min-height: 0;
    overflow: hidden;
}
.channels {
    appearance: none;
    display: block;
    width: 441px;
    height: 23px;
    margin: -18px 3px 6px auto;
    background-color: #515151;
    border: 1px solid #303030;
    border-radius: 3px;
}
.row {
    display: flex;
    align-items: center;
    padding-right: 3px;
}
.row label {
    flex: none;
    width: 321px;
    padding-left: 24px;
    color: #b8b8b8;
    white-space: nowrap;
}
.canvas-part .row label {
    width: 318px;
    margin-right: 3px;
    overflow: hidden;
    color: #c4c4c4;
}
.canvas-part .row {
    height: 18px;
}
.helpbox {
    height: 48px;
    margin: 5px 3px 11px 22px;
    padding: 0 6px;
    display: flex;
    align-items: center;
    gap: 6px;
    background-color: #404040;
    border: 1px solid #232323;
    border-radius: 4px;
    color: #bdbdbd;
    font-size: 13px;
    line-height: 15px;
}
.helpbox p {
    margin: 0;
    white-space: nowrap;
}
.helpbox svg {
    width: 33px;
    height: 33px;
}
.helpbox.small {
    align-items: flex-start;
    padding-top: 5px;
}
.helpbox.small svg {
    width: 29px;
    height: 29px;
}
.component {
    height: 28px;
    display: flex;
    align-items: center;
    padding: 1px 0 0 7px;
    background-color: #3e3e3e;
    border-top: 1px solid #1a1a1a;
    font-weight: 700;
    color: #d2d2d2;
}
.component.open {
    border-bottom: 1px solid #303030;
}
.component label, .component b {
    padding-top: 1px;
}
.fold-arrow {
    color: #767676;
    margin-right: 8px;
}
.type {
    width: 16px;
    height: 18px;
    margin-right: 7px;
}
.component input, .no-check {
    margin-right: 8px;
}
.no-check {
    width: 17px;
}
.acts {
    margin-left: auto;
    display: flex;
    gap: 10px;
    padding-right: 5px;
    color: #c8c8c8;
}
.acts svg {
    width: 15px;
    height: 14px;
}
.body {
    padding-top: 5px;
}
.object {
    height: 23px;
    margin-bottom: 12px;
}
.field {
    flex: 1;
    min-width: 0;
    height: 100%;
    display: flex;
    align-items: center;
    padding-left: 2px;
    background-color: #282828;
    border: 1px solid #202020;
    border-radius: 4px;
    overflow: hidden;
}
.field input {
    flex: 1;
    min-width: 0;
    outline: none;
    color: #cfcfcf;
}
.object .field input {
    padding-top: 1px;
}
.pick {
    height: 100%;
    padding: 0 4px;
    display: flex;
    align-items: center;
    background-color: #363636;
    color: #b4b4b4;
}
.pick svg {
    width: 14px;
    height: 14px;
}
.toggles {
    margin: -11px 0 11px;
}
.toggles .row {
    height: 25px;
}
.slide {
    height: 35px;
    align-items: flex-start;
}
.slide label {
    line-height: 23px;
}
.track {
    flex: 1;
    min-width: 0;
    padding-top: 2px;
}
.track input {
    display: block;
    width: 100%;
}
.ends {
    display: flex;
    justify-content: space-between;
    padding: 0 3px 0 2px;
    font-size: 13px;
    line-height: 10px;
    color: #7e7e7e;
}
.num {
    width: 62px;
    height: 23px;
    margin-left: 5px;
    padding: 1px 3px 0;
    background-color: #2a2a2a;
    border: 1px solid #212121;
    border-top-color: #0d0d0d;
    border-radius: 3px;
    color: #d2d2d2;
}
.foldout {
    display: flex;
    align-items: center;
    gap: 4px;
    padding: 0 0 10px 8px;
    color: #c4c4c4;
}
.foldout svg {
    color: #6c6c6c;
}
.script-body .row {
    height: 22px;
    margin-bottom: 3px;
}
.script-body label {
    width: 329px;
}
.disabled label, .disabled .field input, .disabled .pick {
    color: #7c7c7c;
}
.disabled .field {
    padding-left: 5px;
    background-color: #303030;
    border-color: #2c2c2c;
}
.disabled .pick {
    background-color: #343434;
}
.mini {
    width: 11px;
    height: 14px;
    margin-right: 5px;
    opacity: .5;
}
/* marker under the audio key value */
.key {
    position: relative;
}
.key::after {
    content: "";
    position: absolute;
    left: 317px;
    top: 23px;
    width: 191px;
    height: 5px;
    border-radius: 3px;
    background-color: #e8191b;
}
.script-body {
    padding-bottom: 6px;
    border-bottom: 1px solid #1a1a1a;
}
.footer {
    padding-top: 11px;
    display: flex;
    justify-content: center;
}
.add-component {
    width: 286px;
    height: 29px;
    background-color: #585858;
    border: 1px solid #303030;
    border-radius: 3px;
    color: #e4e4e4;
}
```

FILE: script.js
```js
// Draws the perspective floor grid of the scene view
const horizon = 344.5;
const vanishX = 628;

function addLine(group, x1, y1, x2, y2) {
    const line = document.createElementNS('http://www.w3.org/2000/svg', 'line');
    line.setAttribute('x1', x1);
    line.setAttribute('y1', y1);
    line.setAttribute('x2', x2);
    line.setAttribute('y2', y2);
    group.appendChild(line);
}

const major = document.getElementById('major');
const minor = document.getElementById('minor');

// lines that run across, ten small cells for each big one
for (let i = -2; i < 400; i++) {
    const y = horizon + 1 / (0.003537 + 0.000187 * i);
    if (i % 10 === 0) {
        addLine(major, 304, y - 1, 948, y + 1);
    } else if (i < 40) {
        addLine(minor, 304, y - 1, 948, y + 1);
    }
}

// lines that run to the vanishing point
for (let i = -300; i <= 300; i++) {
    const x = 598.5 + 28.9 * i;
    if (i % 10 === 0) {
        addLine(major, vanishX, horizon, x, 660);
    } else if (Math.abs(i) < 60) {
        addLine(minor, vanishX, horizon, x, 660);
    }
}
```
